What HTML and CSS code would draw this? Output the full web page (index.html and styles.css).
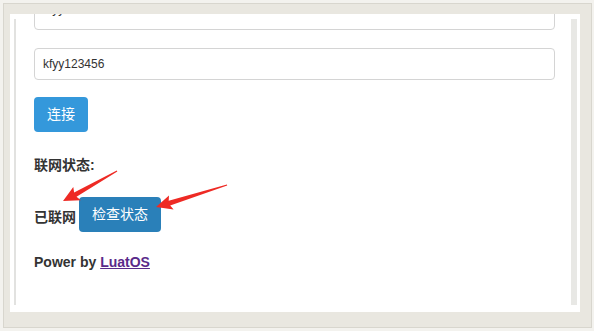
FILE: index.html
```html
<!DOCTYPE html>
<html lang="zh-CN">
<head>
    <meta charset="UTF-8">
    <meta name="viewport" content="width=device-width, initial-scale=1.0">
    <title>LuatOS 配网</title>
    <link rel="stylesheet" href="styles.css">
</head>
<body>
    <div class="frame">
        <div class="shot">
            <div class="edge"></div>
            <div class="content">
                <input class="field first" type="text" value="kfyy">
                <input class="field second" type="text" value="kfyy123456">
                <button class="btn connect">连接</button>
                <p class="label">联网状态:</p>
                <div class="status">
                    <span>已联网</span>
                    <button class="btn check">检查状态</button>
                </div>
                <p class="power">Power by <a href="#">LuatOS</a></p>
            </div>
            <div class="scrollbar"></div>
        </div>

        <!-- red marker arrows drawn on the screenshot -->
        <svg class="arrows" width="594" height="331" viewBox="0 0 594 331">
            <polygon points="117.3,171.4 76.5,196.8 80.8,200.3 63,201 73.3,186.9 74.1,192.4 116.8,170.6" fill="#ee2a24"/>
            <polygon points="227.2,185.5 170.2,205.5 173.6,209.6 156,207 169.0,195.4 168.7,200.7 226.9,184.5" fill="#ee2a24"/>
        </svg>
    </div>
</body>
</html>
```

FILE: styles.css
```css
body{
    margin: 0;
    background-color: #f3f2ee;
    font-family: "Liberation Sans", "Noto Sans CJK SC", sans-serif;
    color: #333;
}

.frame{
    position: relative;
    box-sizing: border-box;
    width: 589px;
    height: 325px;
    margin: 3px 0 0 3px;
    padding: 10px 0 0 6px;
    border: 1px solid #d8d6ce;
    background-color: #e9e7e0;
}

.shot{
    display: flex;
    width: 570px;
    height: 298px;
    background-color: #fff;
}

.edge{
    width: 2px;
    margin: 5px 0 7px 4px;
    background-color: #e2e2e0;
}

.content{
    flex: 1;
    overflow: hidden;
    padding: 0 16px 0 18px;
}

.scrollbar{
    width: 6px;
    margin: 5px 3px 7px 0;
    background-color: #e8e8e5;
}

.field{
    display: block;
    box-sizing: border-box;
    width: 100%;
    height: 32px;
    padding: 0 8px;
    border: 1px solid #d4d4d4;
    border-radius: 4px;
    font-family: inherit;
    font-size: 12px;
    color: #333;
}
.first{
    margin-top: -16px;
    padding-bottom: 10px;
}
.second{
    margin-top: 18px;
}

.btn{
    display: block;
    height: 35px;
    padding: 0 13px;
    border: none;
    border-radius: 4px;
    font-family: inherit;
    font-size: 14px;
    line-height: 35px;
    color: #fff;
}
.connect{
    margin-top: 17px;
    background-color: #3498db;
}
.check{
    background-color: #2a80b9;
}

.label{
    margin: 23px 0 0;
    font-size: 14px;
    line-height: 20px;
    font-weight: bold;
}

.status{
    display: flex;
    align-items: center;
    gap: 3px;
    margin-top: 22px;
    font-size: 14px;
    font-weight: bold;
}
.status span{
    padding-top: 3px;
}

.power{
    margin: 20px 0 0;
    font-size: 14px;
    line-height: 20px;
    font-weight: bold;
}
.power a{
    color: #5a2a8a;
}

.arrows{
    position: absolute;
    left: -4px;
    top: -4px;
}
```
